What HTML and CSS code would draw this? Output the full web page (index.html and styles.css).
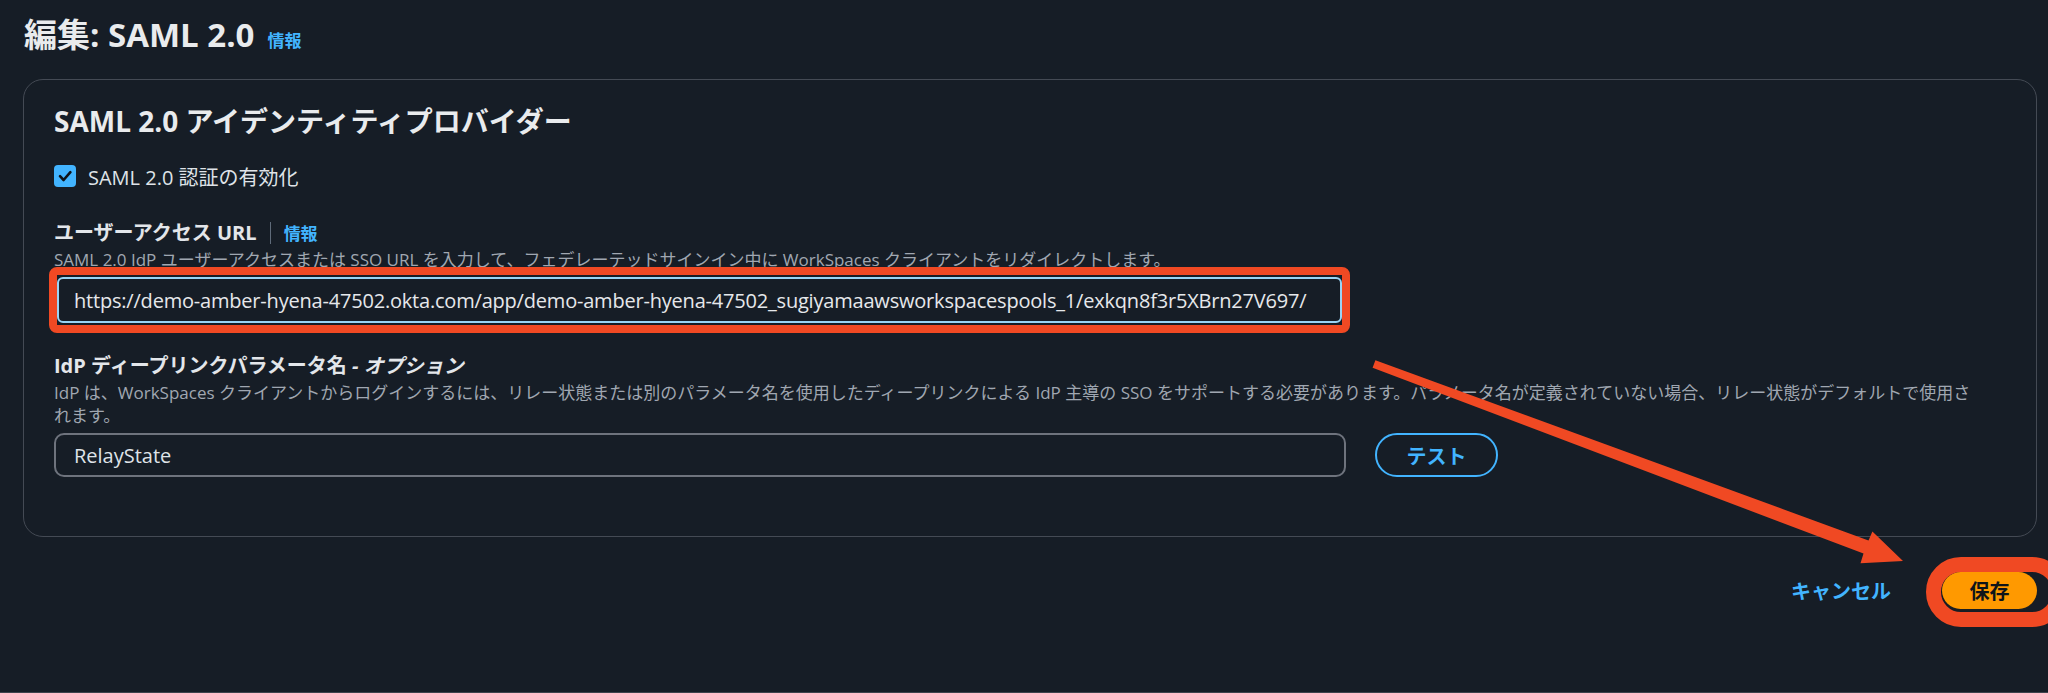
FILE: index.html
```html
<!DOCTYPE html>
<html lang="ja">
  <head>
    <meta charset="UTF-8" />
    <meta name="viewport" content="width=device-width, initial-scale=1.0" />
    <title>編集: SAML 2.0</title>
    <link rel="stylesheet" href="styles.css">
  </head>
  <body>
    <h1 class="page-title">編集: SAML 2.0<a class="info-link" href="#">情報</a></h1>

    <!-- SAML panel -->
    <section class="panel">
      <h2 class="panel-title">SAML 2.0 アイデンティティプロバイダー</h2>

      <label class="check-row">
        <svg class="check-box" width="22" height="22" viewBox="0 0 22 22">
          <rect width="22" height="22" rx="4" fill="#42b4ff" />
          <path d="M6 11.2l3.6 3.8L16.4 7.2" fill="none" stroke="#0f141a" stroke-width="2.6" stroke-linecap="round" stroke-linejoin="round" />
        </svg>
        <span>SAML 2.0 認証の有効化</span>
      </label>

      <div class="field">
        <div class="field-label">
          <span>ユーザーアクセス URL</span>
          <span class="divider"></span>
          <a class="info-link small" href="#">情報</a>
        </div>
        <div class="field-desc">SAML 2.0 IdP ユーザーアクセスまたは SSO URL を入力して、フェデレーテッドサインイン中に WorkSpaces クライアントをリダイレクトします。</div>
        <div class="url-wrap">
          <input class="text-input focused" type="text" value="https://demo-amber-hyena-47502.okta.com/app/demo-amber-hyena-47502_sugiyamaawsworkspacespools_1/exkqn8f3r5XBrn27V697/" />
          <span class="mark-box"></span>
        </div>
      </div>

      <div class="field field-second">
        <div class="field-label">
          <span>IdP ディープリンクパラメータ名 <i>- オプション</i></span>
        </div>
        <div class="field-desc">IdP は、WorkSpaces クライアントからログインするには、リレー状態または別のパラメータ名を使用したディープリンクによる IdP 主導の SSO をサポートする必要があります。パラメータ名が定義されていない場合、リレー状態がデフォルトで使用さ<br>れます。</div>
        <div class="input-row">
          <input class="text-input relay" type="text" value="RelayState" />
          <button class="btn-outline" type="button">テスト</button>
        </div>
      </div>
    </section>

    <div class="form-actions">
      <button class="btn-link" type="button">キャンセル</button>
      <div class="save-wrap">
        <button class="btn-primary" type="button">保存</button>
        <span class="mark-blob"></span>
      </div>
    </div>

    <!-- annotation arrow -->
    <svg class="annot-layer" width="2048" height="693" viewBox="0 0 2048 693">
      <polygon fill="#f04923" points="1375.4,360.3 1868.5,540.4 1872.4,531.4 1903,561 1860.5,563.2 1863.5,553.6 1372.6,367.7" />
    </svg>
  </body>
</html>
```

FILE: styles.css
```css
html {
  height: 100%;
}
body {
  position: relative;
  box-sizing: border-box;
  height: 100vh;
  margin: 0;
  padding: 14px 11px 0 23px;
  overflow: hidden;
  background: #161d26;
  color: #dfe3e8;
  font-family: "Open Sans", "Noto Sans CJK JP", sans-serif;
  border-bottom: 1px solid #3d434c;
}
a {
  text-decoration: none;
}
.page-title {
  height: 42px;
  margin: 0 0 23px 1px;
  font-size: 33px;
  line-height: 42px;
  font-weight: 700;
  color: #e9ebed;
}
.info-link {
  margin-left: 13px;
  font-size: 17px;
  line-height: 1;
  font-weight: 700;
  color: #42b4ff;
}
.info-link.small {
  margin-left: 0;
}
.panel {
  border: 1px solid #444a54;
  border-radius: 20px;
  padding: 23px 30px 59px 30px;
}
.panel-title {
  margin: 0;
  font-size: 28px;
  line-height: 36px;
  font-weight: 700;
  color: #e9ebed;
}
.check-row {
  display: flex;
  align-items: center;
  gap: 12px;
  height: 24px;
  margin-top: 25px;
  font-size: 20px;
  color: #dfe3e8;
}
.field {
  margin-top: 32px;
}
.field-second {
  margin-top: 30px;
}
.field-label {
  display: flex;
  align-items: center;
  gap: 13px;
  font-size: 20px;
  line-height: 26px;
  font-weight: 700;
  color: #e3e6ea;
}
.divider {
  width: 1px;
  height: 22px;
  background: #5f6b7a;
}
.field-desc {
  margin-top: 2px;
  font-size: 17px;
  line-height: 23px;
  color: #a0a7b1;
}
.url-wrap {
  position: relative;
  width: 1292px;
  margin-top: 6px;
}
.text-input {
  box-sizing: border-box;
  display: block;
  width: 1292px;
  height: 44px;
  padding: 0 18px;
  border: 2px solid #6e737d;
  border-radius: 10px;
  background: #161d26;
  color: #dfe3e8;
  font-family: inherit;
  font-size: 20px;
  outline: none;
}
.text-input.focused {
  width: 1285px;
  height: 46px;
  margin-left: 3px;
  padding: 0 12px 0 15px;
  border: 2px solid #9ad4f5;
  border-radius: 6px;
  color: #e6e8eb;
  letter-spacing: -0.2px;
}
.mark-box {
  position: absolute;
  top: -10px;
  bottom: -10px;
  left: -5px;
  right: -4px;
  border: 8px solid #f04923;
  border-radius: 8px;
}
.input-row {
  display: flex;
  align-items: center;
  gap: 29px;
  margin-top: 6px;
}
.btn-outline {
  box-sizing: border-box;
  width: 123px;
  height: 44px;
  border: 2px solid #42b4ff;
  border-radius: 22px;
  background: transparent;
  color: #42b4ff;
  font-family: inherit;
  font-size: 20px;
  font-weight: 700;
}
.form-actions {
  display: flex;
  justify-content: flex-end;
  align-items: center;
  gap: 51px;
  margin-top: 35px;
}
.btn-link {
  padding: 0;
  border: none;
  background: none;
  color: #42b4ff;
  font-family: inherit;
  font-size: 20px;
  font-weight: 700;
}
.save-wrap {
  position: relative;
}
.btn-primary {
  display: block;
  width: 95px;
  height: 37px;
  border: none;
  border-radius: 19px;
  background: #ff9900;
  color: #0f141a;
  font-family: inherit;
  font-size: 20px;
  font-weight: 700;
  box-shadow: 0 2px 0 #1b1e22;
}
.mark-blob {
  position: absolute;
  top: -15px;
  bottom: -18px;
  left: -16px;
  right: -30px;
  border: 15px solid #f04923;
  border-radius: 36px;
}
.annot-layer {
  position: absolute;
  top: 0;
  left: 0;
  pointer-events: none;
}
```
